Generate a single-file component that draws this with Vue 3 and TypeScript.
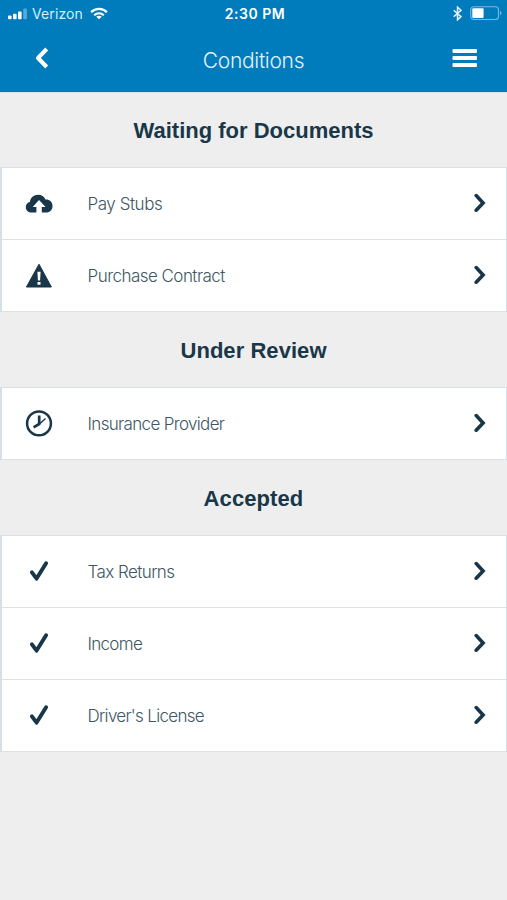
<script setup lang="ts">
type IconName = 'upload' | 'warning' | 'clock' | 'check'

interface Condition {
  label: string
  icon: IconName
  spacing: string
}

interface Section {
  title: string
  spacing: string
  items: Condition[]
}

const sections: Section[] = [
  {
    title: 'Waiting for Documents',
    spacing: '0px',
    items: [
      { label: 'Pay Stubs', icon: 'upload', spacing: '-0.45px' },
      { label: 'Purchase Contract', icon: 'warning', spacing: '-0.53px' },
    ],
  },
  {
    title: 'Under Review',
    spacing: '0.05px',
    items: [{ label: 'Insurance Provider', icon: 'clock', spacing: '-0.66px' }],
  },
  {
    title: 'Accepted',
    spacing: '0.1px',
    items: [
      { label: 'Tax Returns', icon: 'check', spacing: '-0.57px' },
      { label: 'Income', icon: 'check', spacing: '-0.7px' },
      { label: "Driver's License", icon: 'check', spacing: '-0.7px' },
    ],
  },
]
</script>

<template>
  <main class="screen">
    <header class="header">
      <div class="status">
        <div class="carrier">
          <svg class="signal" width="20" height="12" viewBox="0 0 20 12" fill="#fff">
            <rect x="0" y="7.5" width="3.6" height="3.8" rx="1" />
            <rect x="5" y="5.8" width="3.6" height="5.5" rx="1" />
            <rect x="10" y="3.4" width="3.6" height="7.9" rx="1" />
            <rect x="15.3" y="0.6" width="3.6" height="10.7" rx="1" opacity="0.35" />
          </svg>
          <span class="carrier-name">Verizon</span>
          <svg class="wifi" width="18" height="13" viewBox="0 0 18 13" fill="none" stroke="#fff" stroke-width="2.2">
            <path d="M1.1 5.1C5.6 .8 12.4 .8 16.9 5.1" />
            <path d="M4.2 8.2C7 5.7 11 5.7 13.8 8.2" />
            <path d="M9 12.2 6.2 9.7C7.8 8.4 10.2 8.4 11.8 9.7Z" fill="#fff" stroke="none" />
          </svg>
        </div>
        <span class="time">2:30 PM</span>
        <div class="power">
          <svg width="9" height="15" viewBox="0 0 9 15" fill="none" stroke="#e3f2fa" stroke-width="1.5">
            <path d="M.7 4.2 8 10.6 4.5 13.8V1.1L8 4.3.7 10.8" />
          </svg>
          <svg width="32" height="15" viewBox="0 0 32 15">
            <rect x=".7" y=".7" width="27.8" height="12.8" rx="3" fill="none" stroke="#78b9dc" stroke-width="1.1" />
            <rect x="2.3" y="2.3" width="11.3" height="9.6" rx="1" fill="#fff" />
            <path d="M30 5C31.8 5.5 31.8 8.8 30 9.3Z" fill="#78b9dc" />
          </svg>
        </div>
      </div>
      <nav class="nav">
        <button class="icon-button" aria-label="Back">
          <svg width="14" height="22" viewBox="0 0 14 22" fill="none" stroke="#fff" stroke-width="4">
            <path d="M11.7 2 3 11l8.7 9" stroke-linejoin="round" />
          </svg>
        </button>
        <h1 class="title">Conditions</h1>
        <button class="icon-button" aria-label="Menu">
          <svg width="26" height="20" viewBox="0 0 26 20" fill="#fff">
            <rect x=".5" y="1" width="24.5" height="4" rx="1" />
            <rect x=".5" y="8" width="24.5" height="4" rx="1" />
            <rect x=".5" y="15" width="24.5" height="4" rx="1" />
          </svg>
        </button>
      </nav>
    </header>

    <section v-for="section in sections" :key="section.title">
      <h2 class="heading" :style="{ letterSpacing: section.spacing }">{{ section.title }}</h2>
      <ul class="list">
        <li v-for="item in section.items" :key="item.label" class="row">
          <svg class="row-icon" width="28" height="28" viewBox="0 0 28 28">
            <path
              v-if="item.icon === 'upload'"
              fill="#193748"
              fill-rule="evenodd"
              d="M6.9 22.5C3.2 22.5.8 20.4.8 17.2c0-2.7 1.7-4.7 4.1-5.1C5.4 7.6 8.8 4.7 13 4.7c3.5 0 6.3 1.8 7.5 4.9 4.1-.2 7 2.3 7 6.4 0 3.9-2.6 6.5-6.3 6.5H16.8V17h3.8L14 10l-6.3 7h3.7v5.5Z"
            />
            <g v-else-if="item.icon === 'warning'">
              <path d="M14 2.2 26.4 25H1.4Z" fill="#193748" stroke="#193748" stroke-width="1" stroke-linejoin="round" />
              <path d="M12.4 9.8h3.2l-.5 8.7h-2.2ZM12.5 20h3v2.8h-3Z" fill="#fff" />
            </g>
            <g v-else-if="item.icon === 'clock'" fill="none" stroke="#193748">
              <circle cx="14" cy="13.4" r="11.9" stroke-width="2.5" />
              <path d="M14.2 5.6v8.3L8.6 17.4" stroke-width="2.7" />
              <path d="m13.3 15 7.2-6.4" stroke-width="1.4" />
            </g>
            <path
              v-else
              d="m6.9 14.3 4.7 6.3L21.1 5.2"
              fill="none"
              stroke="#193748"
              stroke-width="3.9"
              stroke-linecap="round"
              stroke-linejoin="round"
            />
          </svg>
          <span class="label" :style="{ letterSpacing: item.spacing }">{{ item.label }}</span>
          <svg class="chevron" width="12" height="20" viewBox="0 0 12 20" fill="none" stroke="#193748" stroke-width="3.6">
            <path d="m2.2 2.6 6.9 7.3-6.9 7.3" stroke-linecap="round" />
          </svg>
        </li>
      </ul>
    </section>
  </main>
</template>

<style>
body {
  background: #eee;
}
</style>

<style scoped>
.screen {
  box-sizing: border-box;
  min-height: 900px;
  background: #eee;
  color: #193748;
  font-family: "Liberation Sans", sans-serif;
}

.header {
  height: 92px;
  background: #007cbd;
  border-bottom: 1px solid #d3e7f3;
  margin-bottom: -1px;
  color: #fff;
}

.status {
  display: grid;
  grid-template-columns: 1fr auto 1fr;
  align-items: center;
  height: 27px;
  padding: 0 5px 0 8px;
  font-family: Inter, sans-serif;
}

.carrier {
  display: flex;
  align-items: center;
}

.carrier-name {
  margin: 0 7px 0 4px;
  color: #d8edf8;
  font-size: 14px;
  letter-spacing: 0.1px;
}

.time {
  font-size: 14px;
  font-weight: 600;
  letter-spacing: 0.5px;
}

.power {
  display: flex;
  justify-content: flex-end;
  align-items: center;
  gap: 8px;
}

.nav {
  display: flex;
  justify-content: space-between;
  align-items: center;
  height: 62px;
  padding: 0 29px 0 35px;
}

.icon-button {
  display: flex;
  justify-content: center;
  padding: 0;
  border: 0;
  background: none;
}

.title {
  margin: 5px 0 0 6px;
  color: #e3f2fa;
  font: 300 21px/26px Inter, sans-serif;
  letter-spacing: -0.3px;
}

.heading {
  box-sizing: border-box;
  height: 75px;
  margin: 0;
  padding-top: 26px;
  font-size: 22px;
  font-weight: 700;
  line-height: 26px;
  text-align: center;
}

.list {
  margin: 0;
  padding: 0;
  list-style: none;
  background: #fff;
  border: solid #d5e0e9;
  border-width: 1px 1px 0 2px;
}

.row {
  box-sizing: border-box;
  display: flex;
  align-items: center;
  height: 72px;
  padding: 0 20px 0 23px;
  border-bottom: 1px solid #dce2e7;
}

.label {
  flex: 1;
  margin: 1px 0 0 34.5px;
  color: #405763;
  font: 300 17px/24px Inter, sans-serif;
}

.chevron {
  margin-top: -2px;
}
</style>
